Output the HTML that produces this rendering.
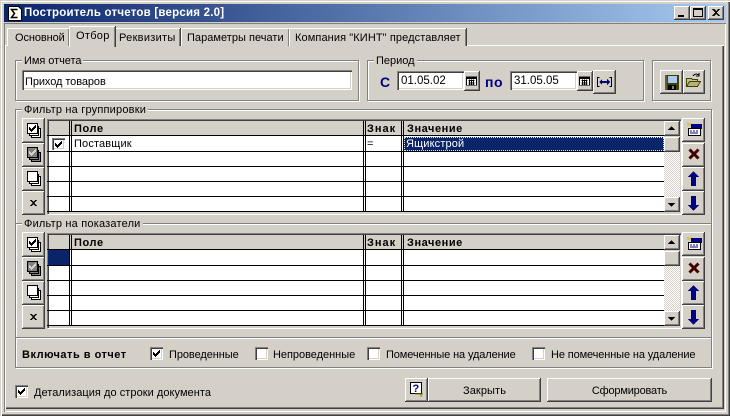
<!DOCTYPE html>
<html><head><meta charset="utf-8"><style>
*{box-sizing:border-box}
html,body{margin:0;padding:0}
body{width:730px;height:416px;overflow:hidden;background:#d4d0c8;position:relative;font:11px "Liberation Sans","Noto Sans CJK SC",sans-serif;color:#000}
div,span,svg{position:absolute}
.t{white-space:nowrap;line-height:13px;height:13px;margin-top:1px}
.b{background:#d4d0c8;box-shadow:inset -1px -1px 0 #404040,inset 1px 1px 0 #fff,inset -2px -2px 0 #808080}
.g{border:1px solid #808080;box-shadow:1px 1px 0 #fff,inset 1px 1px 0 #fff}
.lg{background:#d4d0c8;padding:0 2px;white-space:nowrap;line-height:13px;height:13px;margin-top:1px}
.i{background:#fff;box-shadow:inset 1px 1px 0 #808080,inset 2px 2px 0 #404040,inset -1px -1px 0 #fff,inset -2px -2px 0 #d4d0c8}
.cb{width:13px;height:13px;background:#fff;box-shadow:inset 1px 1px 0 #808080,inset 2px 2px 0 #404040,inset -1px -1px 0 #fff,inset -2px -2px 0 #d4d0c8}
.tab{background:#d4d0c8;border-top:1px solid #fff;border-left:1px solid #fff;box-shadow:inset -1px 0 0 #808080,1px 0 0 #404040}
.h{left:0;height:1px;background:#000}
.v{width:1px;background:#000}
svg{shape-rendering:crispEdges;overflow:visible}
</style></head><body>
<svg width="0" height="0" style="left:0;top:0">
<defs>
<symbol id="ca" viewBox="0 0 13 11"><rect x=".5" y=".5" width="12" height="10" fill="#fff" stroke="#000"/><rect x="1" y="1" width="11" height="2" fill="#000"/><path d="M3 5h7M3 7h7M3 9h7M4 4v6M6.500 4v6M9 4v6" stroke="#000" stroke-width="1" fill="none"/></symbol>
<symbol id="s1" viewBox="0 0 14 15"><rect x="4.500" y="5.500" width="9" height="9" fill="#fff" stroke="#000"/><rect x="2.500" y="3.500" width="9" height="9" fill="#fff" stroke="#000"/><rect x=".5" y=".5" width="10" height="10" fill="#fff" stroke="#000"/><path transform="translate(2 2)" d="M6 0h1v1h-1zM5 1h2v1h-2zM0 2h1v1h-1zM4 2h3v1h-3zM0 3h2v1h-2zM3 3h3v1h-3zM0 4h5v1h-5zM1 5h3v1h-3zM2 6h1v1h-1z" fill="#000"/></symbol>
<symbol id="s2" viewBox="0 0 14 15"><rect x="4.500" y="5.500" width="9" height="9" fill="#808080" stroke="#000"/><rect x="2.500" y="3.500" width="9" height="9" fill="#808080" stroke="#000"/><rect x=".5" y=".5" width="10" height="10" fill="#808080" stroke="#000"/><path transform="translate(2 2)" d="M6 0h1v1h-1zM5 1h2v1h-2zM0 2h1v1h-1zM4 2h3v1h-3zM0 3h2v1h-2zM3 3h3v1h-3zM0 4h5v1h-5zM1 5h3v1h-3zM2 6h1v1h-1z" fill="#d4d0c8"/></symbol>
<symbol id="s3" viewBox="0 0 14 15"><rect x="4.500" y="5.500" width="9" height="9" fill="#fff" stroke="#000"/><rect x="2.500" y="3.500" width="9" height="9" fill="#fff" stroke="#000"/><rect x=".5" y=".5" width="10" height="10" fill="#fff" stroke="#000"/></symbol>
<symbol id="r1" viewBox="0 0 15 13"><path d="M2 0v3M0 2h4M0 0l1 1M4 0l-1 1" stroke="#d8b840" fill="none"/><rect x="4" y="1" width="11" height="5" fill="#000080"/><rect x="1.500" y="5.500" width="12" height="7" fill="#fff" stroke="#000"/><path d="M3 8h2M6 8h2M9 8h2M3 10h8" stroke="#000080"/></symbol>
<symbol id="r2" viewBox="0 0 12 12"><path d="M1.500 1.500L10.500 10.500M10.500 1.500L1.500 10.500" stroke="#400000" stroke-width="3" fill="none" style="shape-rendering:auto"/></symbol>
<symbol id="up" viewBox="0 0 11 15"><path d="M5.500 0L11 6H8V15H3V6H0z" fill="#000080"/></symbol>
<symbol id="dn" viewBox="0 0 11 15"><path d="M5.500 15L11 9H8V0H3V9H0z" fill="#000080"/></symbol>
<symbol id="ck" viewBox="0 0 7 7"><path d="M6 0h1v1h-1zM5 1h2v1h-2zM0 2h1v1h-1zM4 2h3v1h-3zM0 3h2v1h-2zM3 3h3v1h-3zM0 4h5v1h-5zM1 5h3v1h-3zM2 6h1v1h-1z" fill="#000"/></symbol>
</defs></svg>

<!-- window frame -->
<div style="left:1px;top:1px;width:729px;height:415px;box-shadow:inset 1px 1px 0 #fff,inset -1px -1px 0 #404040,inset -2px -2px 0 #808080"></div>
<div style="left:4px;top:23px;width:722px;height:389px;box-shadow:inset 1px 1px 0 #808080,inset -1px -1px 0 #fff"></div>

<!-- title bar -->
<div style="left:4px;top:4px;width:722px;height:18px;background:linear-gradient(90deg,#0a246a,#a6caf0)"></div>
<svg style="left:8px;top:6px" width="14" height="15" viewBox="0 0 14 15"><path d="M.5 .5h10l3 3v11H.500z" fill="#fffff0" stroke="#000"/><path d="M9.500 3.500H3.500L6.500 7.500 3.500 11.500H9.500" fill="none" stroke="#000" stroke-width="1.500" style="shape-rendering:auto"/></svg>
<div class="t" style="left:24px;top:5px;color:#fff;font-weight:bold;font-size:11.500px;line-height:14px;height:14px;letter-spacing:.22px">Построитель отчетов [версия 2.0]</div>
<div class="b" style="left:674px;top:6px;width:16px;height:14px"><div style="left:4px;top:9px;width:6px;height:2px;background:#000"></div></div>
<div class="b" style="left:690px;top:6px;width:16px;height:14px"><div style="left:3px;top:2px;width:10px;height:9px;border:1px solid #000;border-top-width:2px"></div></div>
<div class="b" style="left:708px;top:6px;width:16px;height:14px"><svg style="left:4px;top:3px" width="8" height="7" viewBox="0 0 8 7"><path d="M0 0h2l2 2 2-2h2L5 3.500 8 7H6L4 5 2 7H0l3-3.500z" fill="#000"/></svg></div>

<!-- tab page -->
<div style="left:5px;top:45px;width:719px;height:364px;box-shadow:inset 1px 1px 0 #fff,inset -1px -1px 0 #404040,inset -2px -2px 0 #808080"></div>

<!-- tabs -->
<div class="tab" style="left:7px;top:28px;width:62px;height:18px"></div>
<div class="tab" style="left:115px;top:28px;width:65px;height:18px"></div>
<div class="tab" style="left:181px;top:28px;width:108px;height:18px"></div>
<div class="tab" style="left:289px;top:28px;width:177px;height:18px"></div>
<div class="tab" style="left:69px;top:26px;width:46px;height:21px"></div>
<div class="t" style="left:15px;top:31px;letter-spacing:-.1px">Основной</div>
<div class="t" style="left:76px;top:29px;letter-spacing:.3px">Отбор</div>
<div class="t" style="left:119px;top:31px;letter-spacing:.3px">Реквизиты</div>
<div class="t" style="left:187px;top:31px;letter-spacing:.03px">Параметры печати</div>
<div class="t" style="left:295px;top:31px;letter-spacing:.1px">Компания "КИНТ" представляет</div>

<!-- top groups -->
<div class="g" style="left:15px;top:60px;width:344px;height:41px"></div>
<div class="lg" style="left:22px;top:54px;letter-spacing:-.05px">Имя отчета</div>
<div class="i" style="left:22px;top:70px;width:330px;height:20px"></div>
<div class="t" style="left:25px;top:75px;letter-spacing:-.08px">Приход товаров</div>

<div class="g" style="left:367px;top:60px;width:277px;height:41px"></div>
<div class="lg" style="left:374px;top:54px">Период</div>
<div class="t" style="left:380px;top:74px;color:#000080;font-weight:bold;font-size:14px;line-height:15px;height:15px">С</div>
<div class="i" style="left:397px;top:71px;width:67px;height:19px"></div>
<div class="t" style="left:401px;top:74px;font-size:11.500px">01.05.02</div>
<div class="b" style="left:464px;top:71px;width:16px;height:20px"><svg style="left:2px;top:5px" width="11" height="10"><use href="#ca"/></svg></div>
<div class="t" style="left:485px;top:74px;color:#000080;font-weight:bold;font-size:14px;line-height:15px;height:15px;letter-spacing:.5px">по</div>
<div class="i" style="left:510px;top:71px;width:67px;height:19px"></div>
<div class="t" style="left:514px;top:74px;font-size:11.500px">31.05.05</div>
<div class="b" style="left:577px;top:71px;width:16px;height:20px"><svg style="left:2px;top:5px" width="11" height="10"><use href="#ca"/></svg></div>
<div class="b" style="left:593px;top:70px;width:23px;height:24px"><svg style="left:4px;top:7px" width="15" height="10" viewBox="0 0 15 10"><path d="M2.500.5H.5v9h2M12.500.5h2v9h-2" fill="none" stroke="#000"/><path d="M2 5l3-3v2h5V2l3 3-3 3V6H5v2z" fill="#000080"/></svg></div>

<div class="g" style="left:652px;top:60px;width:59px;height:41px"></div>
<div class="b" style="left:660px;top:70px;width:23px;height:24px"><svg style="left:5px;top:5px" width="14" height="15" viewBox="0 0 14 15"><rect width="14" height="15" fill="#404000"/><rect x="3" y="1" width="9" height="7" fill="#a6caf0"/><rect x="3" y="10" width="8" height="5" fill="#000"/><rect x="7" y="11" width="2" height="3" fill="#808080"/><rect x="0" y="0" width="2" height="15" fill="#606030"/></svg></div>
<div class="b" style="left:683px;top:70px;width:22px;height:24px"><svg style="left:3px;top:3px" width="16" height="15" viewBox="0 0 16 15"><path d="M.5 5.500h5l1 1h5v7H.500z" fill="#c8c498" stroke="#404000"/><path d="M.5 13.500l3-5h11l-3 5z" fill="#b8b078" stroke="#404000"/><path d="M7 3c1-2 4-2.500 6-1M13 0v3h-3" fill="none" stroke="#000"/></svg></div>

<!-- big group -->
<div class="g" style="left:15px;top:109px;width:697px;height:259px"></div>
<div style="left:16px;top:223px;width:695px;height:1px;background:#808080"></div>
<div style="left:16px;top:224px;width:695px;height:1px;background:#fff"></div>
<div style="left:16px;top:337px;width:695px;height:1px;background:#808080"></div>
<div style="left:16px;top:338px;width:695px;height:1px;background:#fff"></div>
<div class="lg" style="left:22px;top:103px;letter-spacing:.2px">Фильтр на группировки</div>
<div class="lg" style="left:22px;top:217px;letter-spacing:.2px">Фильтр на показатели</div>

<!-- left buttons 1 -->
<div class="b" style="left:22px;top:118px;width:23px;height:25px"><svg style="left:5px;top:5px" width="14" height="15"><use href="#s1"/></svg></div>
<div class="b" style="left:22px;top:143px;width:23px;height:24px"><svg style="left:5px;top:4px" width="14" height="15"><use href="#s2"/></svg></div>
<div class="b" style="left:22px;top:167px;width:23px;height:24px"><svg style="left:5px;top:4px" width="14" height="15"><use href="#s3"/></svg></div>
<div class="b" style="left:22px;top:191px;width:23px;height:24px"><svg style="left:8px;top:9px" width="7" height="6" viewBox="0 0 7 6"><path d="M0 0h2l1.500 2L5 0h2L4.500 3 7 6H5L3.500 4 2 6H0l2.500-3z" fill="#000"/></svg></div>

<!-- grid 1 -->
<div style="left:47px;top:119px;width:634px;height:95px;box-shadow:inset 1px 1px 0 #808080,inset 2px 2px 0 #404040,1px 1px 0 #fff">
  <div style="left:2px;top:17px;width:615px;height:76px;background:#fff"></div>
  <div class="h" style="top:16px;width:617px"></div>
  <div class="h" style="top:32px;width:617px"></div>
  <div class="h" style="top:47px;width:617px"></div>
  <div class="h" style="top:62px;width:617px"></div>
  <div class="h" style="top:77px;width:617px"></div>
  <div class="h" style="top:92px;width:617px"></div>
  <div class="v" style="left:22px;top:2px;height:91px"></div><div class="v" style="left:24px;top:2px;height:91px"></div>
  <div class="v" style="left:316px;top:2px;height:91px"></div><div class="v" style="left:318px;top:2px;height:91px"></div>
  <div class="v" style="left:354px;top:2px;height:91px"></div><div class="v" style="left:356px;top:2px;height:91px"></div>
  <div style="left:357px;top:18px;width:260px;height:14px;background:#0a246a;outline:1px dotted #ffe9a0;outline-offset:-1px"></div>
  <div class="cb" style="left:5px;top:19px;height:12px"><svg style="left:3px;top:3px" width="7" height="7"><use href="#ck"/></svg></div>
  <div class="t" style="left:27px;top:3px;font-weight:bold;letter-spacing:.6px">Поле</div>
  <div class="t" style="left:320px;top:3px;font-weight:bold;letter-spacing:1px">Знак</div>
  <div class="t" style="left:360px;top:3px;font-weight:bold;letter-spacing:.55px">Значение</div>
  <div class="t" style="left:27px;top:18px;letter-spacing:.15px">Поставщик</div>
  <div class="t" style="left:320px;top:18px">=</div>
  <div class="t" style="left:359px;top:18px;color:#fff;letter-spacing:.15px">Ящикстрой</div>
  <div style="left:617px;top:33px;width:16px;height:60px;background:repeating-conic-gradient(#fff 0 25%,#d4d0c8 0 50%) 0 0/2px 2px"></div>
  <div class="b" style="left:617px;top:2px;width:16px;height:15px"><svg style="left:4px;top:5px" width="7" height="4" viewBox="0 0 7 4"><path d="M3.500 0L7 4H0z" fill="#000"/></svg></div>
  <div class="b" style="left:617px;top:18px;width:16px;height:15px"></div>
  <div class="b" style="left:617px;top:78px;width:16px;height:15px"><svg style="left:4px;top:6px" width="7" height="4" viewBox="0 0 7 4"><path d="M3.500 4L7 0H0z" fill="#000"/></svg></div>
</div>

<!-- right buttons 1 -->
<div class="b" style="left:682px;top:118px;width:23px;height:24px"><svg style="left:5px;top:5px" width="15" height="13"><use href="#r1"/></svg></div>
<div class="b" style="left:682px;top:143px;width:23px;height:24px"><svg style="left:6px;top:5px" width="12" height="12"><use href="#r2"/></svg></div>
<div class="b" style="left:682px;top:167px;width:23px;height:24px"><svg style="left:6px;top:4px" width="11" height="15"><use href="#up"/></svg></div>
<div class="b" style="left:682px;top:191px;width:23px;height:24px"><svg style="left:6px;top:5px" width="11" height="15"><use href="#dn"/></svg></div>

<!-- left buttons 2 -->
<div class="b" style="left:22px;top:232px;width:23px;height:25px"><svg style="left:5px;top:5px" width="14" height="15"><use href="#s1"/></svg></div>
<div class="b" style="left:22px;top:257px;width:23px;height:24px"><svg style="left:5px;top:4px" width="14" height="15"><use href="#s2"/></svg></div>
<div class="b" style="left:22px;top:281px;width:23px;height:24px"><svg style="left:5px;top:4px" width="14" height="15"><use href="#s3"/></svg></div>
<div class="b" style="left:22px;top:305px;width:23px;height:24px"><svg style="left:8px;top:9px" width="7" height="6" viewBox="0 0 7 6"><path d="M0 0h2l1.500 2L5 0h2L4.500 3 7 6H5L3.500 4 2 6H0l2.500-3z" fill="#000"/></svg></div>

<!-- grid 2 -->
<div style="left:47px;top:233px;width:634px;height:95px;box-shadow:inset 1px 1px 0 #808080,inset 2px 2px 0 #404040,1px 1px 0 #fff">
  <div style="left:2px;top:17px;width:615px;height:76px;background:#fff"></div>
  <div class="h" style="top:16px;width:617px"></div>
  <div class="h" style="top:32px;width:617px"></div>
  <div class="h" style="top:47px;width:617px"></div>
  <div class="h" style="top:62px;width:617px"></div>
  <div class="h" style="top:77px;width:617px"></div>
  <div class="h" style="top:92px;width:617px"></div>
  <div class="v" style="left:22px;top:2px;height:91px"></div><div class="v" style="left:24px;top:2px;height:91px"></div>
  <div class="v" style="left:316px;top:2px;height:91px"></div><div class="v" style="left:318px;top:2px;height:91px"></div>
  <div class="v" style="left:354px;top:2px;height:91px"></div><div class="v" style="left:356px;top:2px;height:91px"></div>
  <div style="left:1px;top:17px;width:21px;height:15px;background:#0a246a"></div>
  <div class="t" style="left:27px;top:3px;font-weight:bold;letter-spacing:.6px">Поле</div>
  <div class="t" style="left:320px;top:3px;font-weight:bold;letter-spacing:1px">Знак</div>
  <div class="t" style="left:360px;top:3px;font-weight:bold;letter-spacing:.55px">Значение</div>
  <div style="left:617px;top:33px;width:16px;height:60px;background:repeating-conic-gradient(#fff 0 25%,#d4d0c8 0 50%) 0 0/2px 2px"></div>
  <div class="b" style="left:617px;top:2px;width:16px;height:15px"><svg style="left:4px;top:5px" width="7" height="4" viewBox="0 0 7 4"><path d="M3.500 0L7 4H0z" fill="#000"/></svg></div>
  <div class="b" style="left:617px;top:18px;width:16px;height:15px"></div>
  <div class="b" style="left:617px;top:78px;width:16px;height:15px"><svg style="left:4px;top:6px" width="7" height="4" viewBox="0 0 7 4"><path d="M3.500 4L7 0H0z" fill="#000"/></svg></div>
</div>

<!-- right buttons 2 -->
<div class="b" style="left:682px;top:232px;width:23px;height:24px"><svg style="left:5px;top:5px" width="15" height="13"><use href="#r1"/></svg></div>
<div class="b" style="left:682px;top:257px;width:23px;height:24px"><svg style="left:6px;top:5px" width="12" height="12"><use href="#r2"/></svg></div>
<div class="b" style="left:682px;top:281px;width:23px;height:24px"><svg style="left:6px;top:4px" width="11" height="15"><use href="#up"/></svg></div>
<div class="b" style="left:682px;top:305px;width:23px;height:24px"><svg style="left:6px;top:5px" width="11" height="15"><use href="#dn"/></svg></div>

<!-- include row -->
<div class="t" style="left:22px;top:348px;font-weight:bold;letter-spacing:.5px">Включать в отчет</div>
<div class="cb" style="left:150px;top:347px"><svg style="left:3px;top:3px" width="7" height="7"><use href="#ck"/></svg></div>
<div class="t" style="left:169px;top:348px;letter-spacing:-.07px">Проведенные</div>
<div class="cb" style="left:255px;top:347px"></div>
<div class="t" style="left:273px;top:348px;letter-spacing:-.03px">Непроведенные</div>
<div class="cb" style="left:367px;top:347px"></div>
<div class="t" style="left:386px;top:348px;letter-spacing:-.12px">Помеченные на удаление</div>
<div class="cb" style="left:532px;top:347px"></div>
<div class="t" style="left:551px;top:348px;letter-spacing:-.12px">Не помеченные на удаление</div>

<!-- footer -->
<div class="cb" style="left:15px;top:385px"><svg style="left:3px;top:3px" width="7" height="7"><use href="#ck"/></svg></div>
<div class="t" style="left:34px;top:386px;letter-spacing:.05px">Детализация до строки документа</div>
<div class="b" style="left:405px;top:378px;width:23px;height:24px"><svg style="left:5px;top:4px" width="14" height="15" viewBox="0 0 14 15"><rect x=".5" y=".5" width="11" height="11" fill="#fff" stroke="#000"/><path d="M11 12v3M5 12h8" stroke="#808000"/><text x="2.500" y="10" font-family="Liberation Sans" font-weight="bold" font-size="11" fill="#000080">?</text></svg></div>
<div class="b" style="left:428px;top:378px;width:113px;height:24px"></div>
<div class="t" style="left:428px;top:384px;width:113px;text-align:center;letter-spacing:.1px">Закрыть</div>
<div class="b" style="left:547px;top:378px;width:165px;height:24px"></div>
<div class="t" style="left:547px;top:384px;width:165px;text-align:center;letter-spacing:-.2px">Сформировать</div>
</body></html>
